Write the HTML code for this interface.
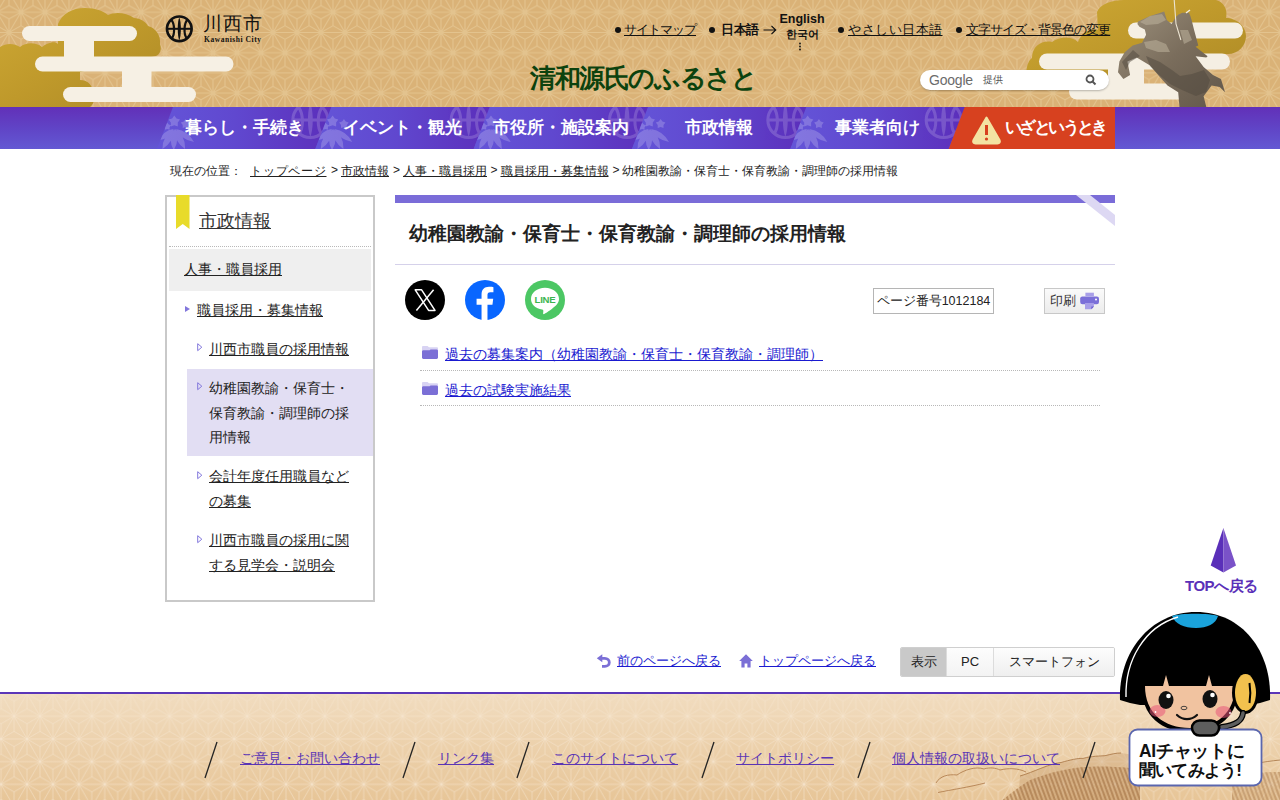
<!DOCTYPE html>
<html lang="ja">
<head>
<meta charset="utf-8">
<title>幼稚園教諭・保育士・保育教諭・調理師の採用情報 - 川西市</title>
<style>
@font-face{font-family:"LibCJK";src:local("Liberation Sans"),local("LiberationSans");size-adjust:133%;unicode-range:U+1100-11FF,U+2E80-9FFF,U+AC00-D7AF,U+F900-FAFF,U+FE30-FE4F,U+FF00-FFEF;}
html,body{margin:0;padding:0;}
body{width:1280px;height:800px;overflow:hidden;position:relative;background:#fff;font-family:"LibCJK","Liberation Sans",sans-serif;color:#222;}
.abs{position:absolute;}
a{color:inherit;}
#hdr{position:absolute;left:0;top:0;width:1280px;height:107px;background:#dab277;overflow:hidden;}
#nav{position:absolute;left:0;top:107px;width:1280px;height:42px;overflow:hidden;background:linear-gradient(180deg,#6230b8 0%,#6044c6 50%,#6358d3 100%);}
.util{position:absolute;top:22px;font-size:13px;color:#111;white-space:nowrap;line-height:16px;}
.util a{}
.dotA{position:absolute;top:27px;width:6px;height:6px;border-radius:50%;background:#111;}
.navi{position:absolute;top:0;height:42px;width:158.33px;}
.navt{position:absolute;top:0;height:42px;line-height:40px;color:#fff;font-size:16.5px;font-weight:bold;white-space:nowrap;}
#crumb{position:absolute;left:170px;top:163px;font-size:12px;color:#222;white-space:nowrap;}
#crumb a{}
.c{position:absolute;top:0;white-space:nowrap;}
a.c{}
#side{position:absolute;left:165px;top:195px;width:206px;height:403px;border:2px solid #c9c9c9;}
.sl{position:absolute;font-size:13.5px;line-height:24.5px;color:#222;}
.sl a{}
.tri{position:absolute;width:0;height:0;border-top:3.75px solid transparent;border-bottom:3.75px solid transparent;border-left:5px solid #8277dc;}
.trio{position:absolute;}
#main{position:absolute;left:395px;top:195px;width:720px;}
.lnk{position:absolute;font-size:14px;color:#1a1ad0;white-space:nowrap;}
.ft a{color:#5a35b5;}
a{text-decoration:underline;}
</style>
</head>
<body>
<!-- HEADER -->
<div id="hdr">
  <svg class="abs" style="left:0;top:0" width="1280" height="107">
    <defs>
      <pattern id="asa" x="21" y="12.3" width="24" height="40.4" patternUnits="userSpaceOnUse">
        <path stroke="#e3c38e" stroke-width="1.1" fill="none" d="M-24 0L0 0M12 20.2L0 13.47M24 0L24 13.47M24 40.4L36 20.2M0 40.4L0 53.87M24 0L12 -6.73M0 0L12 -20.2M-12 60.6L0 40.4M-12 -20.2L0 0M0 40.4L-12 47.13M0 0L12 6.73M-12 20.2L0 40.4M0 0L0 -13.47M24 40.4L36 47.13M24 0L36 20.2M-24 40.4L0 40.4M12 20.2L12 6.73M12 60.6L24 40.4M0 0L12 20.2M-12 20.2L12 20.2M24 0L36 -6.73M12 20.2L12 33.67M0 40.4L-12 33.67M24 40.4L48 40.4M24 40.4L36 33.67M24 0L36 -20.2M0 0L24 0M12 20.2L24 26.93M0 40.4L12 47.13M24 0L36 6.73M0 0L-12 6.73M24 40.4L12 33.67M12 20.2L24 40.4M24 0L24 -13.47M36 20.2L24 26.93M12 20.2L0 26.93M0 40.4L24 40.4M0 40.4L12 60.6M0 40.4L12 33.67M24 40.4L12 47.13M12 -20.2L24 0M24 40.4L24 26.93M0 40.4L12 20.2M24 0L12 6.73M36 20.2L24 13.47M0 0L12 -6.73M24 40.4L24 53.87M12 20.2L36 20.2M12 20.2L24 13.47M12 20.2L24 0M24 0L48 0M-12 20.2L0 26.93M0 0L0 13.47M0 0L-12 -6.73M-12 20.2L0 13.47M-12 20.2L0 0M0 40.4L0 26.93M24 40.4L36 60.6"/>
      </pattern>
    </defs>
    <rect width="1280" height="107" fill="url(#asa)"/>
  </svg>

  <!-- left clouds -->
  <svg class="abs" style="left:0;top:0" width="260" height="107">
    <defs>
      <linearGradient id="gold1" x1="0" y1="0" x2="1" y2="1">
        <stop offset="0" stop-color="#cda834"/><stop offset="0.5" stop-color="#bf992b"/><stop offset="1" stop-color="#ad8a26"/>
      </linearGradient>
    </defs>
    <path fill="url(#gold1)" d="M58 24 C62 14 72 8 85 8 C96 8 103 11 108 15 C114 12 126 12 134 18 C140 18 146 22 148 26 C156 28 161 36 160 44 C162 50 160 54 156 56 L80 72 L80 80 C88 80 94 86 92 94 C96 98 94 104 90 107 L0 107 L0 47 C6 43 14 43 20 47 C26 42 36 42 42 47 C46 44 54 40 58 44 Z"/>
    <g fill="#f6f0e4">
      <rect x="22" y="26" width="115" height="15" rx="7.5"/>
      <rect x="35" y="56.5" width="198.5" height="15" rx="7.5"/>
      <rect x="63" y="87" width="133" height="15" rx="7.5"/>
      <path d="M64 40 H94 V57 H64 Z"/>
      <path d="M122 71 H151.5 V88 H122 Z"/>
    </g>
  </svg>
  <!-- right clouds + statue -->
  <svg class="abs" style="left:1020px;top:0" width="260" height="107">
    <path fill="url(#gold1)" d="M77 12 C80 4 92 0 104 0 L196 0 C204 2 208 10 206 18 C216 18 226 26 226 36 C226 46 218 54 208 54 L80 54 C90 58 96 66 94 76 C92 82 88 84 84 84 L10 84 C4 78 6 62 12 58 C12 46 22 40 32 42 C40 36 52 36 58 42 C62 32 70 28 78 30 Z"/>
    <g fill="#f5efe3">
      <rect x="108" y="22.5" width="115" height="16" rx="8"/>
      <rect x="19" y="53.5" width="191" height="16" rx="8"/>
      <rect x="49" y="83.5" width="130" height="16" rx="8"/>
      <path d="M88 69 H124 V84 H88Z"/>
    </g>
    <defs>
      <linearGradient id="bronze" x1="0" y1="0" x2="1" y2="1">
        <stop offset="0" stop-color="#9c907c"/><stop offset="0.5" stop-color="#7a6d5c"/><stop offset="1" stop-color="#62574a"/>
      </linearGradient>
    </defs>
    <path fill="url(#bronze)" d="M144.2 11.4 L146.8 20.1 L151.5 24.1 L155.5 17.4 L158.2 14.7 L162.2 12.7 L168.9 12.7 L170.2 15.4 L171.6 20.1 L174.3 30.8 L178.3 45.5 L175.6 46.8 L187.6 56.2 L186.3 57.5 L175.6 56.2 L183.6 66.9 L193.0 74.9 L201.0 78.9 L205.0 92.3 L199.7 86.9 L191.6 85.6 L183.6 96.3 L186.3 107.0 L159.5 107.0 L158.2 92.3 L147.5 85.6 L138.1 74.9 L130.1 65.5 L116.7 57.5 L107.4 61.5 L110.1 74.9 L103.4 78.9 L98.0 72.2 L99.4 61.5 L104.7 52.2 L112.7 45.5 L122.1 42.8 L126.1 34.8 L124.8 29.4 L119.4 26.7 L117.4 24.1 L118.1 21.4 L130.1 16.0 L138.1 13.4 Z"/>
    <path fill="#50473d" fill-opacity="0.5" d="M126 56 L140 62 L152 70 L160 76 L172 74 L184 70 L190 80 L186 92 L176 96 L162 90 L150 84 L138 74 L130 66 Z M113 50 L120 56 L110 62 L106 70 L102 62Z"/>
    <path fill="#bdb29c" fill-opacity="0.55" d="M120 22 L130 16 L142 14 L146 20 L138 24 L126 25 Z M124 42 L136 40 L146 44 L150 52 L138 52 L126 48Z M160 30 L168 30 L172 40 L164 44Z"/>
    <path d="M154.2 0 L156 24 L160.9 40" stroke="#ece4d2" stroke-width="1.1" fill="none"/><path d="M166 13 L170 10" stroke="#f3efe6" stroke-width="1.5"/>
  </svg>
  <!-- logo -->
  <svg class="abs" style="left:165px;top:14px" width="30" height="30" viewBox="0 0 30 30">
    <circle cx="14.3" cy="14.8" r="12.3" fill="none" stroke="#111" stroke-width="2.7"/>
    <path d="M2.5 14.8 H26.3" stroke="#111" stroke-width="2"/>
    <path d="M14.3 3.5 C12.2 8 12.2 21.6 14.3 26.3 C16.4 21.6 16.4 8 14.3 3.5Z" fill="#111"/>
    <path d="M6.2 5.8 C9.6 9.5 10.2 20 6.8 24.5" stroke="#111" stroke-width="2.2" fill="none"/>
    <path d="M22.4 5.8 C19 9.5 18.4 20 21.8 24.5" stroke="#111" stroke-width="2.2" fill="none"/>
  </svg>
  <div class="abs" style="left:203px;top:13px;font-size:19px;line-height:22px;color:#111;letter-spacing:1px;">川西市</div>
  <div class="abs" style="left:204px;top:35px;font-size:7.5px;line-height:9px;color:#111;font-family:'Liberation Serif',serif;font-weight:bold;letter-spacing:0.55px;">Kawanishi City</div>
  <!-- utility -->
  <div class="dotA" style="left:614.5px;"></div><div class="util" style="left:624px;letter-spacing:-1px;"><a>サイトマップ</a></div>
  <div class="dotA" style="left:709px;"></div><div class="util" style="left:721px;font-weight:bold;letter-spacing:-0.5px;">日本語</div>
  <svg class="abs" style="left:763px;top:25px" width="14" height="10" viewBox="0 0 14 10"><path d="M0.5 5 H12.5 M8.5 1 L12.8 5 L8.5 9" fill="none" stroke="#111" stroke-width="1.1"/></svg>
  <div class="abs" style="left:775px;top:12px;width:54px;text-align:center;font-size:12.5px;line-height:15px;font-weight:bold;color:#111;">English</div>
  <div class="abs" style="left:775px;top:28px;width:54px;text-align:center;font-size:10.5px;line-height:12px;font-weight:bold;color:#111;">한국어</div>
  <svg class="abs" style="left:798px;top:42px" width="4" height="9"><circle cx="2" cy="1.5" r="0.9" fill="#111"/><circle cx="2" cy="4.5" r="0.9" fill="#111"/><circle cx="2" cy="7.5" r="0.9" fill="#111"/></svg>
  <div class="dotA" style="left:838px;"></div><div class="util" style="left:848px;letter-spacing:0.5px;"><a>やさしい日本語</a></div>
  <div class="dotA" style="left:955.5px;"></div><div class="util" style="left:966px;letter-spacing:-1px;"><a>文字サイズ・背景色の変更</a></div>
  <!-- title -->
  <div class="abs" style="left:530px;top:63px;font-family:'LibCJK','Liberation Sans',sans-serif;font-size:25.5px;line-height:30px;font-weight:bold;color:#0c420e;letter-spacing:-1.4px;white-space:nowrap;">清和源氏のふるさと</div>
  <!-- search -->
  <div class="abs" style="left:920px;top:70px;width:189px;height:20px;border-radius:10px;background:#fff;box-shadow:0 1px 2px rgba(0,0,0,0.25);"></div>
  <div class="abs" style="left:929px;top:71px;font-size:14px;line-height:18px;color:#6b6b6b;letter-spacing:-0.2px;">Google</div>
  <div class="abs" style="left:983px;top:74px;font-size:10px;line-height:12px;color:#555;">提供</div>
  <svg class="abs" style="left:1085px;top:74px" width="12" height="12" viewBox="0 0 12 12"><circle cx="5" cy="5" r="3.5" fill="none" stroke="#555" stroke-width="1.8"/><path d="M7.5 7.5 L10.5 10.5" stroke="#555" stroke-width="2"/></svg>
</div>

<!-- NAV -->
<div id="nav"><svg class="abs" style="left:0;top:0" width="1280" height="42"><defs><linearGradient id="ng" x1="0" y1="0" x2="1" y2="0"><stop offset="0" stop-color="#6455d8"/><stop offset="0.45" stop-color="#6048cf"/><stop offset="1" stop-color="#5c2fbb"/></linearGradient><g id="rind" fill="#ffffff" opacity="0.2"><path d="M9.3 8.5 L11.5 11.5 L15.0 12.6 L12.8 15.6 L12.8 19.4 L9.3 18.2 L5.8 19.4 L5.8 15.6 L3.6 12.6 L7.1 11.5ZM20.6 12.0 L22.4 14.5 L25.4 15.5 L23.5 18.0 L23.5 21.0 L20.6 20.1 L17.7 21.0 L17.7 18.0 L15.8 15.5 L18.8 14.5ZM2.2 15.5 L3.7 17.5 L6.0 18.3 L4.6 20.3 L4.6 22.7 L2.2 22.0 L-0.2 22.7 L-0.2 20.3 L-1.6 18.3 L0.7 17.5ZM8.5 22.0Q-2.7 28.9 -2.5 42.0Q8.7 35.1 8.5 22.0ZM9.3 22.0Q2.5 32.3 8.7 43.0Q15.5 32.7 9.3 22.0ZM10.0 22.0Q9.2 34.9 20.0 42.0Q20.8 29.1 10.0 22.0ZM11.0 22.0Q16.8 33.0 29.0 35.0Q23.2 24.0 11.0 22.0ZM8.0 22.0Q-1.7 23.7 -5.0 33.0Q4.7 31.3 8.0 22.0Z"/></g><g id="circ" fill="none" stroke="#ffffff" opacity="0.17" stroke-width="3"><circle cx="0" cy="0" r="17.5"/><path d="M-18 0 H18"/><path d="M-12 -13 C-7 -7 -6.5 7 -11 13.5M12 -13 C7 -7 6.5 7 11 13.5"/><path d="M0 -17 C-3.2 -8 -3.2 8 0 17 C3.2 8 3.2 -8 0 -17Z" fill="#fff" stroke="none"/></g></defs><path fill="url(#ng)" d="M173.00 0 H331.33 L315.33 42 H157.00 Z"/><g clip-path="url(#c0)"><use href="#rind" x="165.00" y="0"/><use href="#circ" x="310.33" y="13"/></g><clipPath id="c0"><path d="M173.00 0 H353.33 L337.33 42 H157.00 Z"/></clipPath><path fill="url(#ng)" d="M331.33 0 H489.67 L473.67 42 H315.33 Z"/><g clip-path="url(#c1)"><use href="#rind" x="323.33" y="0"/><use href="#circ" x="468.67" y="13"/></g><clipPath id="c1"><path d="M331.33 0 H511.67 L495.67 42 H315.33 Z"/></clipPath><path fill="url(#ng)" d="M489.67 0 H648.00 L632.00 42 H473.67 Z"/><g clip-path="url(#c2)"><use href="#rind" x="481.67" y="0"/><use href="#circ" x="627.00" y="13"/></g><clipPath id="c2"><path d="M489.67 0 H670.00 L654.00 42 H473.67 Z"/></clipPath><path fill="url(#ng)" d="M648.00 0 H806.33 L790.33 42 H632.00 Z"/><g clip-path="url(#c3)"><use href="#rind" x="640.00" y="0"/><use href="#circ" x="785.33" y="13"/></g><clipPath id="c3"><path d="M648.00 0 H828.33 L812.33 42 H632.00 Z"/></clipPath><path fill="url(#ng)" d="M806.33 0 H964.67 L948.67 42 H790.33 Z"/><g clip-path="url(#c4)"><use href="#rind" x="798.33" y="0"/><use href="#circ" x="943.67" y="13"/></g><clipPath id="c4"><path d="M806.33 0 H986.67 L970.67 42 H790.33 Z"/></clipPath><path fill="#d7411f" d="M964.67 0 H1115 V42 H948.67 Z"/><path d="M986.5 10.5 L999.5 33 C1000.5 35 999.5 36.5 997.5 36.5 L975.5 36.5 C973.5 36.5 972.5 35 973.5 33 Z" fill="#f3e3a2" stroke="#f3e3a2" stroke-width="2" stroke-linejoin="round"/><path d="M986.5 18 V28" stroke="#d7411f" stroke-width="3"/><circle cx="986.5" cy="32" r="1.6" fill="#d7411f"/></svg><div class="navt" style="left:165.00px;width:158.33px;text-align:center;">暮らし・手続き</div><div class="navt" style="left:323.33px;width:158.33px;text-align:center;">イベント・観光</div><div class="navt" style="left:481.67px;width:158.33px;text-align:center;">市役所・施設案内</div><div class="navt" style="left:640.00px;width:158.33px;text-align:center;">市政情報</div><div class="navt" style="left:798.33px;width:158.33px;text-align:center;">事業者向け</div><div class="navt" style="left:1005px;letter-spacing:-2.6px;">いざというとき</div></div>

<!-- BREADCRUMB -->
<div id="crumb"><span class="c" style="left:0">現在の位置：</span><a class="c" style="left:80px;letter-spacing:0.75px;">トップページ</a><span class="c" style="left:161px">&gt;</span><a class="c" style="left:171px;">市政情報</a><span class="c" style="left:223px">&gt;</span><a class="c" style="left:233px;">人事・職員採用</a><span class="c" style="left:320.5px">&gt;</span><a class="c" style="left:330.5px;">職員採用・募集情報</a><span class="c" style="left:442.5px">&gt;</span><span class="c" style="left:452px">幼稚園教諭・保育士・保育教諭・調理師の採用情報</span></div>

<!-- SIDEBAR -->
<div id="side">
  <svg class="abs" style="left:9px;top:-2px" width="15" height="36"><path d="M0 0 H13.5 V34 L6.75 29 L0 34 Z" fill="#e8db2a"/></svg>
  <div class="abs" style="left:32px;top:12px;font-size:17.5px;line-height:24px;color:#333;"><a>市政情報</a></div>
  <div class="abs" style="left:2px;top:49px;width:202px;border-top:1px dotted #b9b9b9;"></div>
  <div class="abs" style="left:2px;top:52px;width:202px;height:42px;background:#efefef;"></div>
  <div class="sl" style="left:17px;top:61px;"><a>人事・職員採用</a></div>
  <div class="tri" style="left:18px;top:108.5px;"></div>
  <div class="sl" style="left:30px;top:102px;"><a>職員採用・募集情報</a></div>
  <svg class="trio" style="left:30px;top:145.5px" width="7" height="9"><path d="M0.7 0.7 L4.8 4.2 L0.7 7.7 Z" fill="none" stroke="#8277dc" stroke-width="1"/></svg>
  <div class="sl" style="left:42px;top:141px;"><a>川西市職員の採用情報</a></div>
  <div class="abs" style="left:20px;top:172px;width:186px;height:87px;background:#e2def3;"></div>
  <svg class="trio" style="left:30px;top:184.5px" width="7" height="9"><path d="M0.7 0.7 L4.8 4.2 L0.7 7.7 Z" fill="none" stroke="#8277dc" stroke-width="1"/></svg>
  <div class="sl" style="left:42px;top:180px;width:150px;">幼稚園教諭・保育士・保育教諭・調理師の採用情報</div>
  <svg class="trio" style="left:30px;top:273.5px" width="7" height="9"><path d="M0.7 0.7 L4.8 4.2 L0.7 7.7 Z" fill="none" stroke="#8277dc" stroke-width="1"/></svg>
  <div class="sl" style="left:42px;top:268px;width:150px;"><a>会計年度任用職員などの募集</a></div>
  <svg class="trio" style="left:30px;top:337.5px" width="7" height="9"><path d="M0.7 0.7 L4.8 4.2 L0.7 7.7 Z" fill="none" stroke="#8277dc" stroke-width="1"/></svg>
  <div class="sl" style="left:42px;top:332px;width:150px;"><a>川西市職員の採用に関する見学会・説明会</a></div>
</div>

<!-- MAIN -->
<div class="abs" style="left:395px;top:195px;width:720px;height:8px;background:#7a6cd8;"></div>
<svg class="abs" style="left:1070px;top:195px" width="45" height="35"><path d="M6 0 H20 L45 20 V31 Z" fill="#ddd8f3"/></svg>
<div class="abs" style="left:409px;top:220px;font-size:19px;line-height:28px;font-weight:bold;color:#222;white-space:nowrap;">幼稚園教諭・保育士・保育教諭・調理師の採用情報</div>
<div class="abs" style="left:395px;top:264px;width:720px;height:1px;background:#d5d1ea;"></div>
<!-- social -->
<svg class="abs" style="left:405px;top:280px" width="40" height="40" viewBox="0 0 40 40"><circle cx="20" cy="20" r="20" fill="#000"/><path d="M10.2 9.8 H16.6 L30 30.4 H23.6 Z" fill="none" stroke="#fff" stroke-width="1.5" stroke-linejoin="round"/><path d="M28.6 9.8 L11.4 30.4" stroke="#fff" stroke-width="1.5"/></svg>
<svg class="abs" style="left:465px;top:280px" width="40" height="40" viewBox="0 0 40 40"><circle cx="20" cy="20" r="20" fill="#0866ff"/><path transform="translate(20 40) scale(1.08) translate(-20 -40)" d="M22.3 40 V25.8 H26.9 L27.6 20.4 H22.3 V17 C22.3 15.5 22.8 14.4 25 14.4 H27.8 V9.6 C27.3 9.5 25.6 9.3 23.7 9.3 C19.6 9.3 16.8 11.8 16.8 16.4 V20.4 H12.2 V25.8 H16.8 V40 Z" fill="#fff"/></svg>
<svg class="abs" style="left:525px;top:280px" width="40" height="40" viewBox="0 0 40 40"><circle cx="20" cy="20" r="20" fill="#4cc764"/><path d="M20 7.8 C12 7.8 6 12.8 6 19 C6 24.4 10.6 28.6 17.2 29.6 C18.2 29.8 18.5 30.4 18.3 31.6 L18.1 33.4 C18 34 18.5 34.4 19.2 34 C22.2 32.4 28 28.4 31.4 25 C33.1 23.1 34 21.2 34 19 C34 12.8 28 7.8 20 7.8Z" fill="#fff"/><text x="20" y="22.6" text-anchor="middle" font-family="Liberation Sans" font-weight="bold" font-size="9.6" fill="#3cb550" letter-spacing="-0.2">LINE</text></svg>
<div class="abs" style="left:873px;top:288px;width:119px;height:24px;border:1px solid #b5b5b5;font-size:12.5px;line-height:24px;text-align:center;color:#222;background:#fff;">ページ番号1012184</div>
<div class="abs" style="left:1044px;top:288px;width:59px;height:24px;border:1px solid #c8c8c8;background:linear-gradient(#fafafa,#ececec);font-size:12.5px;line-height:24px;color:#333;"><span style="position:absolute;left:5px;font-size:13px;">印刷</span>
  <svg class="abs" style="left:34px;top:3px" width="22" height="19" viewBox="0 0 22 19"><rect x="6.4" y="0.7" width="8.5" height="3.4" fill="#a89ee8"/><rect x="1.2" y="4.4" width="18.8" height="7.8" rx="2.2" fill="#7b6fd8"/><circle cx="17" cy="7.6" r="1" fill="#fff"/><path d="M6 11 H14.9 V14.6 L12.4 17.2 H6 Z" fill="#a89ee8"/><path d="M14.9 14.6 L12.4 17.2 V14.6Z" fill="#6a5cd0"/></svg></div>
<!-- links -->
<svg class="abs" style="left:422px;top:346px" width="16" height="13" viewBox="0 0 16 13"><path d="M0 1.2 C0 0.5 0.5 0 1.2 0 H5.5 L7 1.2 H14.8 C15.5 1.2 16 1.7 16 2.4 V6 H0 Z" fill="#d8d3f3"/><path d="M0 5.6 C0 4.8 0.6 4.2 1.4 4.2 H7.6 L8.6 3.4 H14.6 C15.4 3.4 16 4 16 4.8 V11.6 C16 12.4 15.4 13 14.6 13 H1.4 C0.6 13 0 12.4 0 11.6 Z" fill="#7b6fd6"/></svg>
<div class="lnk" style="left:445px;top:346px;"><a>過去の募集案内（幼稚園教諭・保育士・保育教諭・調理師）</a></div>
<div class="abs" style="left:420px;top:370px;width:680px;border-top:1px dotted #b8b8b8;"></div>
<svg class="abs" style="left:422px;top:382px" width="16" height="13" viewBox="0 0 16 13"><path d="M0 1.2 C0 0.5 0.5 0 1.2 0 H5.5 L7 1.2 H14.8 C15.5 1.2 16 1.7 16 2.4 V6 H0 Z" fill="#d8d3f3"/><path d="M0 5.6 C0 4.8 0.6 4.2 1.4 4.2 H7.6 L8.6 3.4 H14.6 C15.4 3.4 16 4 16 4.8 V11.6 C16 12.4 15.4 13 14.6 13 H1.4 C0.6 13 0 12.4 0 11.6 Z" fill="#7b6fd6"/></svg>
<div class="lnk" style="left:445px;top:382px;"><a>過去の試験実施結果</a></div>
<div class="abs" style="left:420px;top:405px;width:680px;border-top:1px dotted #b8b8b8;"></div>

<!-- TOP button -->
<svg class="abs" style="left:1208px;top:526px" width="30" height="48" viewBox="0 0 30 48"><path d="M15.4 2 L2.7 39.6 L15.4 46.4 Z" fill="#5a2fb9"/><path d="M15.4 2 L28 39.6 L15.4 46.4 Z" fill="#7a52c8"/></svg>
<div class="abs" style="left:1185px;top:576px;font-size:15px;line-height:20px;font-weight:bold;color:#5a30b8;white-space:nowrap;letter-spacing:-0.5px;">TOPへ戻る</div>

<!-- PAGE NAV -->
<svg class="abs" style="left:596px;top:654px" width="15" height="14" viewBox="0 0 15 14"><path d="M0.8 4.3 L6.3 0.3 V8.3 Z" fill="#7b6fd6"/><path d="M5 4.3 H8.8 C11.4 4.3 13.3 6.2 13.3 8.5 C13.3 10.8 11.4 12.4 8.8 12.4 H6" fill="none" stroke="#7b6fd6" stroke-width="2.8"/></svg>
<div class="lnk" style="left:617px;top:652px;font-size:13px;"><a>前のページへ戻る</a></div>
<svg class="abs" style="left:738.5px;top:654px" width="14" height="14" viewBox="0 0 14 14"><path d="M7 0.3 L0.2 7 H2.4 V13.5 H5.6 V9.5 H8.4 V13.5 H11.6 V7 H13.8 Z" fill="#7b6fd6"/></svg>
<div class="lnk" style="left:759px;top:652px;font-size:13px;"><a>トップページへ戻る</a></div>
<div class="abs" style="left:900px;top:647px;width:213px;height:28px;border:1px solid #cfcfcf;border-radius:2px;background:#fff;overflow:hidden;font-size:13px;line-height:28px;color:#222;">
  <div class="abs" style="left:0;top:0;width:45px;height:28px;background:#c9c9c9;text-align:center;line-height:27px;">表示</div>
  <div class="abs" style="left:45px;top:0;width:46px;height:28px;background:linear-gradient(#fdfdfd,#f3f3f3);border-left:1px solid #dcdcdc;text-align:center;line-height:27px;">PC</div>
  <div class="abs" style="left:92px;top:0;width:121px;height:28px;background:linear-gradient(#fdfdfd,#efefef);border-left:1px solid #dcdcdc;text-align:center;line-height:27px;">スマートフォン</div>
</div>

<!-- FOOTER -->
<div class="abs ft" style="left:0;top:692px;width:1280px;height:108px;border-top:2px solid #5b36b8;background:linear-gradient(#f1dcbf,#e7c597);overflow:hidden;">
  <svg class="abs" style="left:0;top:0" width="1280" height="108">
    <defs>
      <pattern id="asa2" x="14.06" y="22.25" width="25.9" height="45.4" patternUnits="userSpaceOnUse">
        <path stroke="#f6e6cf" stroke-opacity="0.6" stroke-width="0.9" fill="none" d="M-25.9 0L0 0M-25.9 45.4L0 45.4M-12.95 -22.7L0 0M-12.95 22.7L0 0M-12.95 22.7L0 15.13M-12.95 22.7L0 30.27M-12.95 22.7L0 45.4M-12.95 22.7L12.95 22.7M-12.95 68.1L0 45.4M0 0L-12.95 -7.57M0 0L-12.95 7.57M0 0L0 -15.13M0 0L0 15.13M0 0L12.95 -22.7M0 0L12.95 -7.57M0 0L12.95 7.57M0 0L12.95 22.7M0 0L25.9 0M0 45.4L-12.95 37.83M0 45.4L-12.95 52.97M0 45.4L0 30.27M0 45.4L0 60.53M0 45.4L12.95 22.7M0 45.4L12.95 37.83M0 45.4L12.95 52.97M0 45.4L12.95 68.1M0 45.4L25.9 45.4M12.95 -22.7L25.9 0M12.95 22.7L0 15.13M12.95 22.7L0 30.27M12.95 22.7L12.95 7.57M12.95 22.7L12.95 37.83M12.95 22.7L25.9 0M12.95 22.7L25.9 15.13M12.95 22.7L25.9 30.27M12.95 22.7L25.9 45.4M12.95 22.7L38.85 22.7M12.95 68.1L25.9 45.4M25.9 0L12.95 -7.57M25.9 0L12.95 7.57M25.9 0L25.9 -15.13M25.9 0L25.9 15.13M25.9 0L38.85 -22.7M25.9 0L38.85 -7.57M25.9 0L38.85 7.57M25.9 0L38.85 22.7M25.9 0L51.8 0M25.9 45.4L12.95 37.83M25.9 45.4L12.95 52.97M25.9 45.4L25.9 30.27M25.9 45.4L25.9 60.53M25.9 45.4L38.85 22.7M25.9 45.4L38.85 37.83M25.9 45.4L38.85 52.97M25.9 45.4L38.85 68.1M25.9 45.4L51.8 45.4M38.85 22.7L25.9 15.13M38.85 22.7L25.9 30.27"/>
      </pattern>
    </defs>
    <rect width="1280" height="108" fill="url(#asa2)"/>
    <defs><pattern id="hatch" width="4" height="4" patternUnits="userSpaceOnUse" patternTransform="rotate(70)"><rect width="4" height="4" fill="#c29464" fill-opacity="0.35"/><path d="M0 1 H4" stroke="#9c6a3c" stroke-width="1.4" stroke-opacity="0.75"/></pattern></defs>
    <path d="M1018 108 L1020 82 C1034 78 1048 70 1061 68.5 C1070 66 1078 64 1083 64.4 C1092 62 1100 62 1105 61.7 C1112 60 1116 59 1121 59 L1140 62 V108 Z" fill="#c69a6c" fill-opacity="0.35"/>
    <path d="M1000 108 C1010 100 1020 92 1030 86 C1045 80 1060 76 1075 74 C1090 72 1110 72 1130 74 L1140 76 V108 Z" fill="url(#hatch)"/>
    <path d="M1232 108 V84 C1245 80 1260 78 1280 78 V108 Z" fill="url(#hatch)" fill-opacity="0.7"/>
    <path d="M1236 76 C1248 70 1262 68 1280 66" fill="none" stroke="#a87444" stroke-width="1" stroke-opacity="0.8"/>
    <path d="M936 89 C940 82 948 80 957 81 C964 76 976 72 984 75 C990 73 996 74 1000 76 C1008 74 1018 74 1026 78 M938 98.5 C950 96 970 93 985 89" fill="none" stroke="#b07c4c" stroke-width="1" stroke-opacity="0.85"/>
    <path d="M1020 82 C1034 78 1048 70 1061 68.5 C1070 66 1078 64 1083 64.4 C1092 62 1100 62 1105 61.7 C1112 60 1116 59 1121 59" fill="none" stroke="#a87444" stroke-width="1" stroke-opacity="0.8"/>
  </svg>
  <svg class="abs" style="left:0;top:0" width="1280" height="108">
    <g stroke="#222" stroke-width="1.3">
      <path d="M217 48 L205 84"/><path d="M415 48 L403 84"/><path d="M529 48 L517 84"/><path d="M714 48 L702 84"/><path d="M870 48 L858 84"/><path d="M1095 48 L1083 84"/>
    </g>
  </svg>
  <div class="abs" style="left:240px;top:55px;font-size:14px;line-height:18px;white-space:nowrap;"><a>ご意見・お問い合わせ</a></div>
  <div class="abs" style="left:438px;top:55px;font-size:14px;line-height:18px;white-space:nowrap;"><a>リンク集</a></div>
  <div class="abs" style="left:552px;top:55px;font-size:14px;line-height:18px;white-space:nowrap;"><a>このサイトについて</a></div>
  <div class="abs" style="left:736px;top:55px;font-size:14px;line-height:18px;white-space:nowrap;"><a>サイトポリシー</a></div>
  <div class="abs" style="left:892px;top:55px;font-size:14px;line-height:18px;white-space:nowrap;"><a>個人情報の取扱いについて</a></div>
</div>

<!-- AI chat -->
<svg class="abs" style="left:1110px;top:605px" width="170" height="185" viewBox="0 0 170 185">
  <path d="M10 95 C8 48 40 7 86 7 C132 7 162 46 160 95 L150 98 L140 100 L30 100 L20 98 Z" fill="#000"/>
  <path d="M62 11 C70 8 100 8 108 11 C106 19 97 23 86 23 C74 23 65 19 62 11Z" fill="#1aa3db"/>
  <path d="M16 92 C15 56 34 22 68 12" fill="none" stroke="#fff" stroke-width="1.4"/>
  <path d="M31 78 C31 112 52 127 80 127 C108 127 129 112 129 78 Z" fill="#000"/>
  <path d="M35 81 H53 L56 70 L59 81 H96 L99 70 L102 81 H125 C125 108 106 123 80 123 C54 123 35 108 35 81 Z" fill="#f1c3a0"/>
  <ellipse cx="47.5" cy="106" rx="8" ry="6" fill="#e8557a" fill-opacity="0.55"/>
  <ellipse cx="113.5" cy="107" rx="8" ry="6" fill="#e8557a" fill-opacity="0.55"/>
  <circle cx="45.5" cy="107" r="0.9" fill="#fff"/><circle cx="120" cy="108" r="0.9" fill="#fff"/>
  <ellipse cx="56" cy="95" rx="7.5" ry="9" fill="#111"/><circle cx="58.5" cy="91" r="2.3" fill="#fff"/>
  <ellipse cx="100" cy="94" rx="7.5" ry="9" fill="#111"/><circle cx="102.5" cy="90" r="2.3" fill="#fff"/>
  <ellipse cx="74" cy="103" rx="3" ry="1.7" fill="none" stroke="#333" stroke-width="0.9"/>
  <path d="M67 110 C73 115.5 81 115.5 87 110" fill="none" stroke="#111" stroke-width="2.2" stroke-linecap="round"/>
  <ellipse cx="135.5" cy="87.5" rx="13.5" ry="21.5" fill="#000"/>
  <ellipse cx="135.5" cy="87.5" rx="10.5" ry="18.5" fill="#f2c14e"/>
  <path d="M139.5 78 C140.5 84 140.5 92 139.5 98" stroke="#000" stroke-width="2" fill="none"/>
  <path d="M133 108 C132 116 126 120 112 122" fill="none" stroke="#000" stroke-width="6" stroke-linecap="round"/>
  <path d="M133 108 C132 116 126 120 112 122" fill="none" stroke="#5e5e5e" stroke-width="3.5" stroke-linecap="round"/>
  <rect x="19.5" y="124.5" width="132" height="56" rx="8" fill="#fff" stroke="#5a66ae" stroke-width="1.8"/>
  <rect x="82" y="115.5" width="27" height="15" rx="7.5" fill="#5d5d5d" stroke="#000" stroke-width="2.5"/>
  </svg>
<div class="abs" style="left:1139px;top:741px;font-size:17.5px;line-height:20px;font-weight:bold;color:#111;white-space:nowrap;letter-spacing:-0.3px;">AIチャットに</div>
<div class="abs" style="left:1139px;top:761px;font-size:17px;line-height:20px;font-weight:bold;color:#111;white-space:nowrap;letter-spacing:-0.8px;">聞いてみよう!</div>

</body>
</html>
